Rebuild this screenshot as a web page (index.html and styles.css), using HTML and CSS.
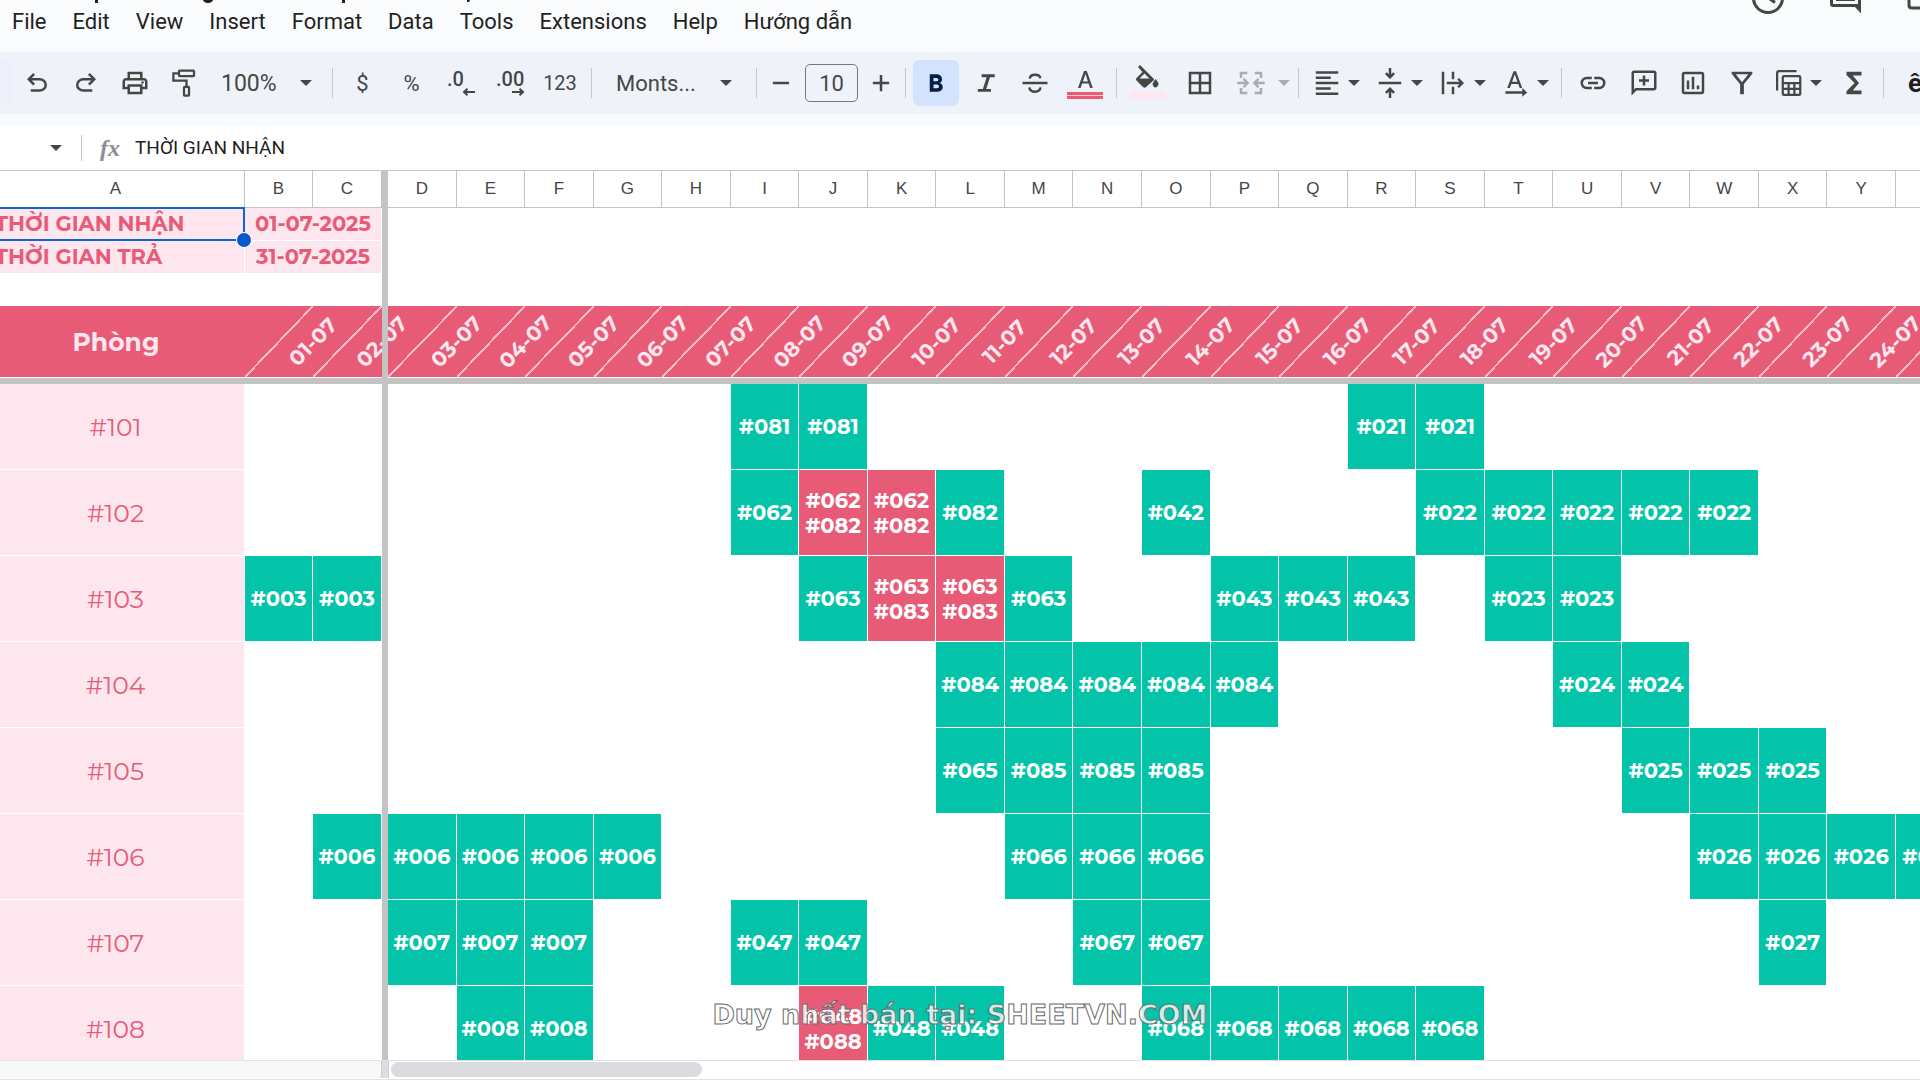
FILE: index.html
```html
<!DOCTYPE html>
<html lang="vi">
<head>
<meta charset="utf-8">
<title>SHEETVN.COM</title>
<meta name="viewport" content="width=device-width, initial-scale=1">
<link rel="stylesheet" href="styles.css">
</head>
<body>
<svg class="defs" aria-hidden="true">
  <symbol id="caret" viewBox="0 0 12 6"><path d="M0 0h12L6 6z"/></symbol>
</svg>
<div class="app">
  <header class="top">
    <div class="top-left">
      <svg class="title-edge" viewBox="0 0 480 3" aria-hidden="true"><path d="M95 0h3v3h-3zM203 0h10q-1 3-5 3t-5-3zM342 0h3v3h-3zM467 0h3l-1 2h-2z"/></svg>
      <nav class="menu">
        <a href="#">File</a><a href="#">Edit</a><a href="#">View</a><a href="#">Insert</a><a href="#">Format</a><a href="#">Data</a><a href="#">Tools</a><a href="#">Extensions</a><a href="#">Help</a><a href="#">Hướng dẫn</a>
      </nav>
    </div>
    <div class="quick">
      <button aria-label="Version history"><svg viewBox="0 0 36 15"><g fill="none" stroke="#444746" stroke-width="3"><path d="M3.500-2a14.500 14.500 0 0 0 29 0M17-3l8 5.500"/></g></svg></button>
      <button aria-label="Comments"><svg viewBox="0 0 36 15"><path d="M2 0h3v4h25V0h3v13.500L27 7H5Q2 7 2 4zM8 0h19v1H8z" fill="#444746"/></svg></button>
      <button aria-label="Meet"><svg viewBox="0 0 36 15"><path d="M3 0v5q0 3 3 3h24" fill="none" stroke="#444746" stroke-width="3"/></svg></button>
    </div>
  </header>

  <div class="toolbar" role="toolbar">
    <span class="search-edge"></span>
    <button class="tool" aria-label="Undo"><svg class="icon" viewBox="0 0 24 24"><path d="M7 19v-2h7.100q1.575 0 2.738-1T18 13.500 16.838 11 14.100 10H7.800l2.600 2.600L9 14 4 9l5-5 1.400 1.400L7.800 8h6.300q2.425 0 4.163 1.575T20 13.500t-1.737 3.925T14.100 19z"/></svg></button>
    <button class="tool" aria-label="Redo"><svg class="icon" viewBox="0 0 24 24"><path d="M17 19v-2H9.900q-1.575 0-2.738-1T6 13.500 7.163 11 9.900 10h6.300l-2.600 2.600L15 14l5-5-5-5-1.400 1.400L16.200 8H9.900Q7.475 8 5.737 9.575T4 13.500t1.737 3.925T9.900 19z"/></svg></button>
    <button class="tool" aria-label="Print"><svg class="icon" viewBox="0 0 24 24"><path d="M19 8h-1V3H6v5H5c-1.660 0-3 1.340-3 3v6h4v4h12v-4h4v-6c0-1.660-1.340-3-3-3M8 5h8v3H8zm8 14H8v-4h8zm2-4v-2H6v2H4v-4c0-.55.45-1 1-1h14c.55 0 1 .45 1 1v4z"/><circle cx="18" cy="11.500" r="1"/></svg></button>
    <button class="tool" aria-label="Paint format"><svg class="icon" viewBox="0 0 24 24"><g fill="none" stroke="#444746" stroke-width="1.800"><rect x="8" y="2" width="12" height="4.500" rx=".5"/><path d="M8 4.200H3.500V10H14v5"/><rect x="12" y="15" width="4" height="7" rx=".5"/></g></svg></button>
    <button class="drop zoom"><span>100%</span><svg class="caret"><use href="#caret"/></svg></button>
    <span class="sep"></span>
    <button class="tool glyph">$</button>
    <button class="tool glyph">%</button>
    <button class="tool decimals" aria-label="Decrease decimal places"><span>.0</span><svg viewBox="0 0 14 8"><path d="M13 4H2M5.500.800 2 4l3.500 3.200"/></svg></button>
    <button class="tool decimals" aria-label="Increase decimal places"><span>.00</span><svg viewBox="0 0 14 8"><path d="M1 4h11M8.500.800 12 4 8.500 7.200"/></svg></button>
    <button class="tool wide number">123</button>
    <span class="sep"></span>
    <button class="drop font"><span>Monts...</span><svg class="caret"><use href="#caret"/></svg></button>
    <span class="sep"></span>
    <button class="step" aria-label="Decrease font size"><svg class="icon" viewBox="0 0 24 24"><path d="M5.500 11h13v2h-13z"/></svg></button>
    <input class="size" type="text" value="10" aria-label="Font size">
    <button class="step" aria-label="Increase font size"><svg class="icon" viewBox="0 0 24 24"><path d="M11 5.500h2V11h5.500v2H13v5.500h-2V13H5.500v-2H11z"/></svg></button>
    <span class="sep"></span>
    <button class="tool on" aria-label="Bold" aria-pressed="true"><svg class="icon" viewBox="0 0 24 24"><path fill="#041e49" d="M7 19V5h5.500q1.700 0 3 1.050T16.800 8.900q0 1.300-.6 2t-1.150 1q.7.300 1.500 1.100T17.400 15.400q0 2-1.450 2.800T13 19zm3-2.800h2.600q1.200 0 1.500-.600t.3-.9-.35-.9-1.550-.6H10zm0-5.600h2.300q.8 0 1.200-.4t.4-.95q0-.600-.45-.95t-1.150-.4H10z"/></svg></button>
    <button class="tool" aria-label="Italic"><svg class="icon" viewBox="0 0 24 24"><path d="M5.500 19v-2.300h4l3-9.400h-4V5H19v2.300h-3.800l-3 9.400H16V19z"/></svg></button>
    <button class="tool" aria-label="Strikethrough"><svg class="icon" viewBox="0 0 24 24"><g fill="none" stroke="#444746" stroke-width="2"><path d="M2 12h20M7.800 8.500C8.300 4.500 15.500 4.500 16.300 8.200M7.500 15.500c.2 4.800 9 4.500 8.800 0"/></g></svg></button>
    <button class="tool wide" aria-label="Text color"><svg class="swatch" viewBox="0 0 36 36"><path d="M11 23 17 6h2.800l6 17h-2.700l-1.500-4.400h-6.500L13.600 23zm4.900-6.600h5L18.500 9h-.1z"/><path fill="#e85b77" d="M0 27h36v7H0z"/><path fill="#f8c5cf" d="M0 30h36v1H0z"/></svg></button>
    <span class="sep"></span>
    <button class="tool wide" aria-label="Fill color"><svg class="swatch" viewBox="0 0 36 36"><path d="m8 2 2-2 13.500 13.500q1 1 0 2L16 22q-1.500 1.500-3 0L6.500 15.500q-1.200-1.200 0-2.400L12.500 7zm6.500 6.500-5 5h10zM25.500 14q3.500 4 3 5.500-1 3-3 3t-3-3q0-1.500 3-5.500"/><path fill="#fde6ed" d="M0 27h36v7H0z"/></svg></button>
    <button class="tool wide" aria-label="Borders"><svg class="icon" viewBox="0 0 24 24"><path d="M3 3v18h18V3zm8 16H5v-6h6zm0-8H5V5h6zm8 8h-6v-6h6zm0-8h-6V5h6z"/></svg></button>
    <button class="split merge" disabled aria-label="Merge cells"><svg class="icon" viewBox="0 0 24 24"><path d="M3 3h6v2H5v3H3zm12 0h6v5h-2V5h-4zM3 16h2v3h4v2H3zm16 0h2v5h-6v-2h4zM1 11h6L5.300 9.300 6.700 8l4 4-4 4-1.400-1.300L7 13H1zm22 0h-6l1.700-1.700L17.300 8l-4 4 4 4 1.400-1.300L17 13h6z"/></svg><svg class="caret"><use href="#caret"/></svg></button>
    <span class="sep"></span>
    <button class="split" aria-label="Horizontal align"><svg class="icon" viewBox="0 0 24 24"><path d="M3 2.500h18v2H3zm0 4.300h12v2H3zM3 11h18v2H3zm0 4.300h12v2H3zm0 4.200h18v2H3z"/></svg><svg class="caret"><use href="#caret"/></svg></button>
    <button class="split" aria-label="Vertical align"><svg class="icon" viewBox="0 0 24 24"><path d="M3 11h18v2H3zM11 0h2v5l1.600-1.600L16 4.800l-4 4-4-4 1.400-1.400L11 5zm0 24h2v-5l1.600 1.600 1.400-1.400-4-4-4 4 1.400 1.400L11 19z"/></svg><svg class="caret"><use href="#caret"/></svg></button>
    <button class="split" aria-label="Text wrapping"><svg class="icon" viewBox="0 0 24 24"><path d="M3 3h2v18H3zm8 0h2v6h-2zm0 12h2v6h-2zm-4-4h10.200l-1.800-1.800L16.800 8l4 4-4 4-1.400-1.300 1.800-1.700H7z"/></svg><svg class="caret"><use href="#caret"/></svg></button>
    <button class="split" aria-label="Text rotation"><svg class="icon" viewBox="0 0 24 24"><path d="M5 16 10 2.500h2L17 16h-2l-1.200-3.300H8.300L7 16zm3.900-5h4.200L11 5zM3.500 18.500H17V16l4 3.500-4 3.500v-2.500H3.500z"/></svg><svg class="caret"><use href="#caret"/></svg></button>
    <span class="sep"></span>
    <button class="tool wide" aria-label="Insert link"><svg class="icon" viewBox="0 0 24 24"><path d="M11 17H7q-2.075 0-3.537-1.463T2 12t1.463-3.537T7 7h4v2H7q-1.250 0-2.125.875T4 12t.875 2.125T7 15h4zm-3-4v-2h8v2zm5 4v-2h4q1.250 0 2.125-.875T20 12t-.875-2.125T17 9h-4V7h4q2.075 0 3.538 1.463T22 12t-1.463 3.538T17 17z"/></svg></button>
    <button class="tool" aria-label="Insert comment"><svg class="icon" viewBox="0 0 24 24"><path d="M11 14h2v-3h3V9h-3V6h-2v3H8v2h3zm-9 8V4q0-.825.587-1.412T4 2h16q.825 0 1.413.588T22 4v12q0 .825-.587 1.413T20 18H6zm3.150-6H20V4H4v13.125z"/></svg></button>
    <button class="tool" aria-label="Insert chart"><svg class="icon" viewBox="0 0 24 24"><path d="M7 17h2v-7H7zm8 0h2v-3h-2zm-4 0h2V7h-2zm-6 4q-.825 0-1.413-.587T3 19V5q0-.825.587-1.412T5 3h14q.825 0 1.413.588T21 5v14q0 .825-.587 1.413T19 21zm0-2h14V5H5z"/></svg></button>
    <button class="tool" aria-label="Create a filter"><svg class="icon" viewBox="0 0 24 24"><path d="M7 5h10l-5.010 6.300zm-3.200-.39C6 7.500 10.500 13 10.500 13v8h3v-8s4.500-5.500 6.700-8.390A.998.998 0 0 0 19.500 3h-15c-.83 0-1.300.950-.7 1.610"/></svg></button>
    <button class="split" aria-label="Filter views"><svg class="icon" viewBox="0 0 24 24"><path fill="none" stroke="#444746" stroke-width="1.800" d="M2.500 18V4q0-1.500 1.500-1.500h14M8 6.500h12q1 0 1 1v13q0 1-1 1H8q-1 0-1-1v-13q0-1 1-1zM7 12h14M7 16.700h14M11.700 12v9M16.300 12v9"/></svg><svg class="caret"><use href="#caret"/></svg></button>
    <button class="tool" aria-label="Functions"><svg class="icon" viewBox="0 0 24 24"><path d="M6 21v-2.500l6.500-6.500L6 5.500V3h12v3h-7l5 6-5 6h7v3z"/></svg></button>
    <span class="sep"></span>
    <button class="input-tools" aria-label="Input tools">ê</button>
  </div>

  <div class="formula">
    <button class="name-drop" aria-label="Name box"><svg class="caret"><use href="#caret"/></svg></button>
    <span class="formula-sep"></span>
    <label class="fx" for="fx">fx</label>
    <input id="fx" class="fx-input" type="text" value="THỜI GIAN NHẬN">
  </div>

  <main class="grid">
    <table class="sheet">
      <colgroup><col class="c-room"><col class="c-first"><col class="c-second"><col class="c-freeze"><col span="23"></colgroup>
      <thead>
        <tr class="letters"><th>A</th><th>B</th><th>C</th><td class="bar"></td><th>D</th><th>E</th><th>F</th><th>G</th><th>H</th><th>I</th><th>J</th><th>K</th><th>L</th><th>M</th><th>N</th><th>O</th><th>P</th><th>Q</th><th>R</th><th>S</th><th>T</th><th>U</th><th>V</th><th>W</th><th>X</th><th>Y</th><th></th></tr>
      </thead>
      <tbody>
        <tr class="info"><th class="selected">THỜI GIAN NHẬN</th><td colspan="2" class="date">01-07-2025</td><td class="bar"></td><td colspan="23"></td></tr>
        <tr class="info"><th>THỜI GIAN TRẢ</th><td colspan="2" class="date">31-07-2025</td><td class="bar"></td><td colspan="23"></td></tr>
        <tr class="blank"><td colspan="3"></td><td class="bar"></td><td colspan="23"></td></tr>
        <tr class="days"><th class="rooms">Phòng</th><th><span>01-07</span></th><th><span>02-07</span></th><td class="bar"></td><th><span>03-07</span></th><th><span>04-07</span></th><th><span>05-07</span></th><th><span>06-07</span></th><th><span>07-07</span></th><th><span>08-07</span></th><th><span>09-07</span></th><th><span>10-07</span></th><th><span>11-07</span></th><th><span>12-07</span></th><th><span>13-07</span></th><th><span>14-07</span></th><th><span>15-07</span></th><th><span>16-07</span></th><th><span>17-07</span></th><th><span>18-07</span></th><th><span>19-07</span></th><th><span>20-07</span></th><th><span>21-07</span></th><th><span>22-07</span></th><th><span>23-07</span></th><th><span>24-07</span></th><th></th></tr>
        <tr class="freeze"><td colspan="27"></td></tr>
        <tr class="room"><th>#101</th><td colspan="2"></td><td class="bar"></td><td colspan="5"></td><td class="ok">#081</td><td class="ok">#081</td><td colspan="7"></td><td class="ok">#021</td><td class="ok">#021</td><td colspan="7"></td></tr>
        <tr class="room"><th>#102</th><td colspan="2"></td><td class="bar"></td><td colspan="5"></td><td class="ok">#062</td><td class="clash">#062<br>#082</td><td class="clash">#062<br>#082</td><td class="ok">#082</td><td colspan="2"></td><td class="ok">#042</td><td colspan="3"></td><td class="ok">#022</td><td class="ok">#022</td><td class="ok">#022</td><td class="ok">#022</td><td class="ok">#022</td><td colspan="3"></td></tr>
        <tr class="room"><th>#103</th><td class="ok">#003</td><td class="ok">#003</td><td class="bar"></td><td colspan="6"></td><td class="ok">#063</td><td class="clash">#063<br>#083</td><td class="clash">#063<br>#083</td><td class="ok">#063</td><td colspan="2"></td><td class="ok">#043</td><td class="ok">#043</td><td class="ok">#043</td><td></td><td class="ok">#023</td><td class="ok">#023</td><td colspan="5"></td></tr>
        <tr class="room"><th>#104</th><td colspan="2"></td><td class="bar"></td><td colspan="8"></td><td class="ok">#084</td><td class="ok">#084</td><td class="ok">#084</td><td class="ok">#084</td><td class="ok">#084</td><td colspan="4"></td><td class="ok">#024</td><td class="ok">#024</td><td colspan="4"></td></tr>
        <tr class="room"><th>#105</th><td colspan="2"></td><td class="bar"></td><td colspan="8"></td><td class="ok">#065</td><td class="ok">#085</td><td class="ok">#085</td><td class="ok">#085</td><td colspan="6"></td><td class="ok">#025</td><td class="ok">#025</td><td class="ok">#025</td><td colspan="2"></td></tr>
        <tr class="room"><th>#106</th><td></td><td class="ok">#006</td><td class="bar"></td><td class="ok">#006</td><td class="ok">#006</td><td class="ok">#006</td><td class="ok">#006</td><td colspan="5"></td><td class="ok">#066</td><td class="ok">#066</td><td class="ok">#066</td><td colspan="7"></td><td class="ok">#026</td><td class="ok">#026</td><td class="ok">#026</td><td class="ok">#026</td></tr>
        <tr class="room"><th>#107</th><td colspan="2"></td><td class="bar"></td><td class="ok">#007</td><td class="ok">#007</td><td class="ok">#007</td><td colspan="2"></td><td class="ok">#047</td><td class="ok">#047</td><td colspan="3"></td><td class="ok">#067</td><td class="ok">#067</td><td colspan="8"></td><td class="ok">#027</td><td colspan="2"></td></tr>
        <tr class="room"><th>#108</th><td colspan="2"></td><td class="bar"></td><td></td><td class="ok">#008</td><td class="ok">#008</td><td colspan="3"></td><td class="clash">#048<br>#088</td><td class="ok">#048</td><td class="ok">#048</td><td colspan="2"></td><td class="ok">#068</td><td class="ok">#068</td><td class="ok">#068</td><td class="ok">#068</td><td class="ok">#068</td><td colspan="7"></td></tr>
      </tbody>
    </table>
  </main>

  <div class="scroll"><span class="scroll-left"></span><span class="scroll-split"></span><span class="thumb"></span></div>
  <p class="watermark">Duy nhất bán tại: SHEETVN.COM</p>
</div>
</body>
</html>
```
FILE: styles.css
```css
* { box-sizing: border-box; }
body { margin: 0; font-family: Roboto, "Noto Sans", sans-serif; color: #1f1f1f; background: #fff; }
button { flex: none; margin: 0; padding: 0; border: 0; background: none; font: inherit; color: #444746; }
.defs { position: absolute; width: 0; height: 0; }

.app { position: relative; display: flex; flex-direction: column; height: 100vh; overflow: hidden; }
.top, .toolbar, .formula, .scroll { flex: none; }

/* menu bar */
.top { display: flex; justify-content: space-between; height: 52px; overflow: hidden; background: #f9fbfd; }
.title-edge { display: block; width: 480px; height: 3px; fill: #1f1f1f; }
.menu { display: flex; gap: 26px; padding: 5px 0 0 12px; white-space: nowrap; }
.menu a { color: #1f1f1f; font-size: 22px; line-height: 28px; text-decoration: none; }
.quick { display: flex; gap: 42px; margin-right: -22px; }
.quick button { width: 36px; height: 15px; }
.quick svg { display: block; width: 36px; height: 15px; }

/* toolbar */
.toolbar { display: flex; align-items: center; height: 62px; overflow: hidden; background: #eff3f9; }
.search-edge { flex: none; width: 12px; height: 44px; background: #ebf0fa; }
.icon { display: block; flex: none; width: 30px; height: 30px; fill: #444746; }
.swatch { display: block; width: 36px; height: 36px; fill: #444746; }
.caret { display: block; flex: none; width: 12px; height: 6px; fill: #444746; }
.tool { display: flex; align-items: center; justify-content: center; width: 49px; height: 46px; font-size: 20px; }
.tool.wide { width: 52px; }
.tool.glyph { font-size: 22px; }
.tool.on { width: 46px; margin: 0 2px; border-radius: 6px; background: #d3e3fd; }
.decimals { flex-direction: column; line-height: 18px; font-weight: 500; }
.decimals span { align-self: flex-start; padding-left: 11px; }
.decimals svg { width: 14px; height: 8px; margin-left: 16px; fill: none; stroke: #444746; stroke-width: 2; }
.sep { flex: none; width: 1px; height: 30px; margin: 0 5px; background: #c7c7c7; }
.drop { display: flex; align-items: center; justify-content: space-between; height: 46px; }
.zoom { width: 119px; padding: 0 15px 0 13px; font-size: 23px; }
.font { width: 154px; padding: 0 19px; font-size: 22px; }
.step { display: flex; align-items: center; justify-content: center; width: 38px; height: 46px; }
.size { flex: none; width: 53px; height: 38px; margin: 0 4px 0 5px; padding: 0; border: 1px solid #747775; border-radius: 5px; background: none; color: #444746; font: 22px Roboto, sans-serif; text-align: center; }
.split { display: flex; align-items: center; gap: 6px; width: 63px; height: 46px; padding-left: 8px; }
.split.merge { width: 67px; padding-left: 10px; gap: 12px; opacity: .4; }
.input-tools { padding-left: 19px; color: #1f1f1f; font-size: 26px; font-weight: 700; }

/* formula bar */
.formula { display: flex; align-items: center; height: 56px; border-top: 12px solid #f9fbfd; background: #fff; }
.name-drop { padding: 0 19px 0 50px; }
.formula-sep { flex: none; width: 1px; height: 26px; background: #c7c7c7; }
.fx { width: 53px; padding-left: 18px; color: #8a8d91; font: italic 700 24px/28px "Liberation Serif", serif; }
.fx-input { flex: 1; min-width: 0; padding: 0; border: 0; background: none; color: #1f1f1f; font: 19px/28px Roboto, sans-serif; }

/* sheet */
.grid { flex: 1; min-height: 0; overflow: hidden; }
.sheet { width: 103%; margin-left: -13px; table-layout: fixed; border-collapse: separate; border-spacing: 0; font-family: Montserrat, Inter, sans-serif; }
.c-room { width: 258px; }
.c-first { width: 68px; }
.c-second { width: 69px; }
.c-freeze { width: 6px; }
.sheet th, .sheet td { padding: 0; }
.sheet .bar { position: relative; z-index: 2; border: 0; background: #c4c4c4; }

.letters th { height: 38px; border: solid #c4c4c4; border-width: 1px 1px 1px 0; color: #444746; font: 17px "Liberation Sans", Arial, sans-serif; }

.info { height: 33px; color: #e85b77; font-size: 21px; line-height: 24px; }
.info th, .info .date { border: solid #fff; border-width: 0 1px 1px 0; background: #fde6ed; font-weight: 700; }
.info th { position: relative; padding-left: 8px; text-align: left; }
.info .date { text-align: center; }
.selected::before { content: ""; position: absolute; inset: -1px -1px -1px 0; border: 2px solid #1062e2; }
.selected::after { content: ""; position: absolute; z-index: 1; right: -8px; bottom: -8px; width: 14px; height: 14px; border: 1px solid #fff; border-radius: 50%; background: #0b57d0; }
.blank { height: 32px; }

.days { height: 72px; color: #fde6ed; }
.days th { border-bottom: 1px solid #fff; background: linear-gradient(to bottom right, transparent calc(50% - 1px), #f9b9c7 calc(50% - 1px), #f9b9c7 calc(50% + 1px), transparent calc(50% + 1px)) #e85b77; font-size: 21px; font-weight: 700; }
.days .rooms { background: #e85b77; font-size: 25px; }
.days span { display: block; width: 200%; line-height: 24px; transform: rotate(-45deg); }

.freeze td { height: 6px; background: #c4c4c4; }

.room { height: 86px; text-align: center; }
.room th { border: solid #fff; border-width: 0 1px 1px 0; background: #fde6ed; color: #e85b77; font-size: 25px; font-weight: 400; }
.ok, .clash { border: solid #fff; border-width: 0 1px 1px 0; color: #fff; font-size: 21px; font-weight: 700; line-height: 25px; }
.ok { background: #03c4a9; }
.clash { background: #e85b77; }

/* bottom scroll bar */
.scroll { display: flex; height: 20px; border: solid #e1e1e1; border-width: 1px 0; background: #fff; }
.scroll-left { width: 381px; height: 17px; background: #f8f8f8; }
.scroll-split { width: 8px; height: 17px; border: solid #d0d0d0; border-width: 0 1px; background: #dadce6; }
.thumb { width: 311px; height: 15px; margin: 1px 2px; border-radius: 8px; background: #dadce0; }

.watermark { position: absolute; left: 0; right: 0; bottom: 48px; margin: 0; color: rgba(255, 255, 255, .8); font: 700 27px/34px "DejaVu Sans", sans-serif; text-align: center; -webkit-text-stroke: 1px #6b6b6b; }
```
